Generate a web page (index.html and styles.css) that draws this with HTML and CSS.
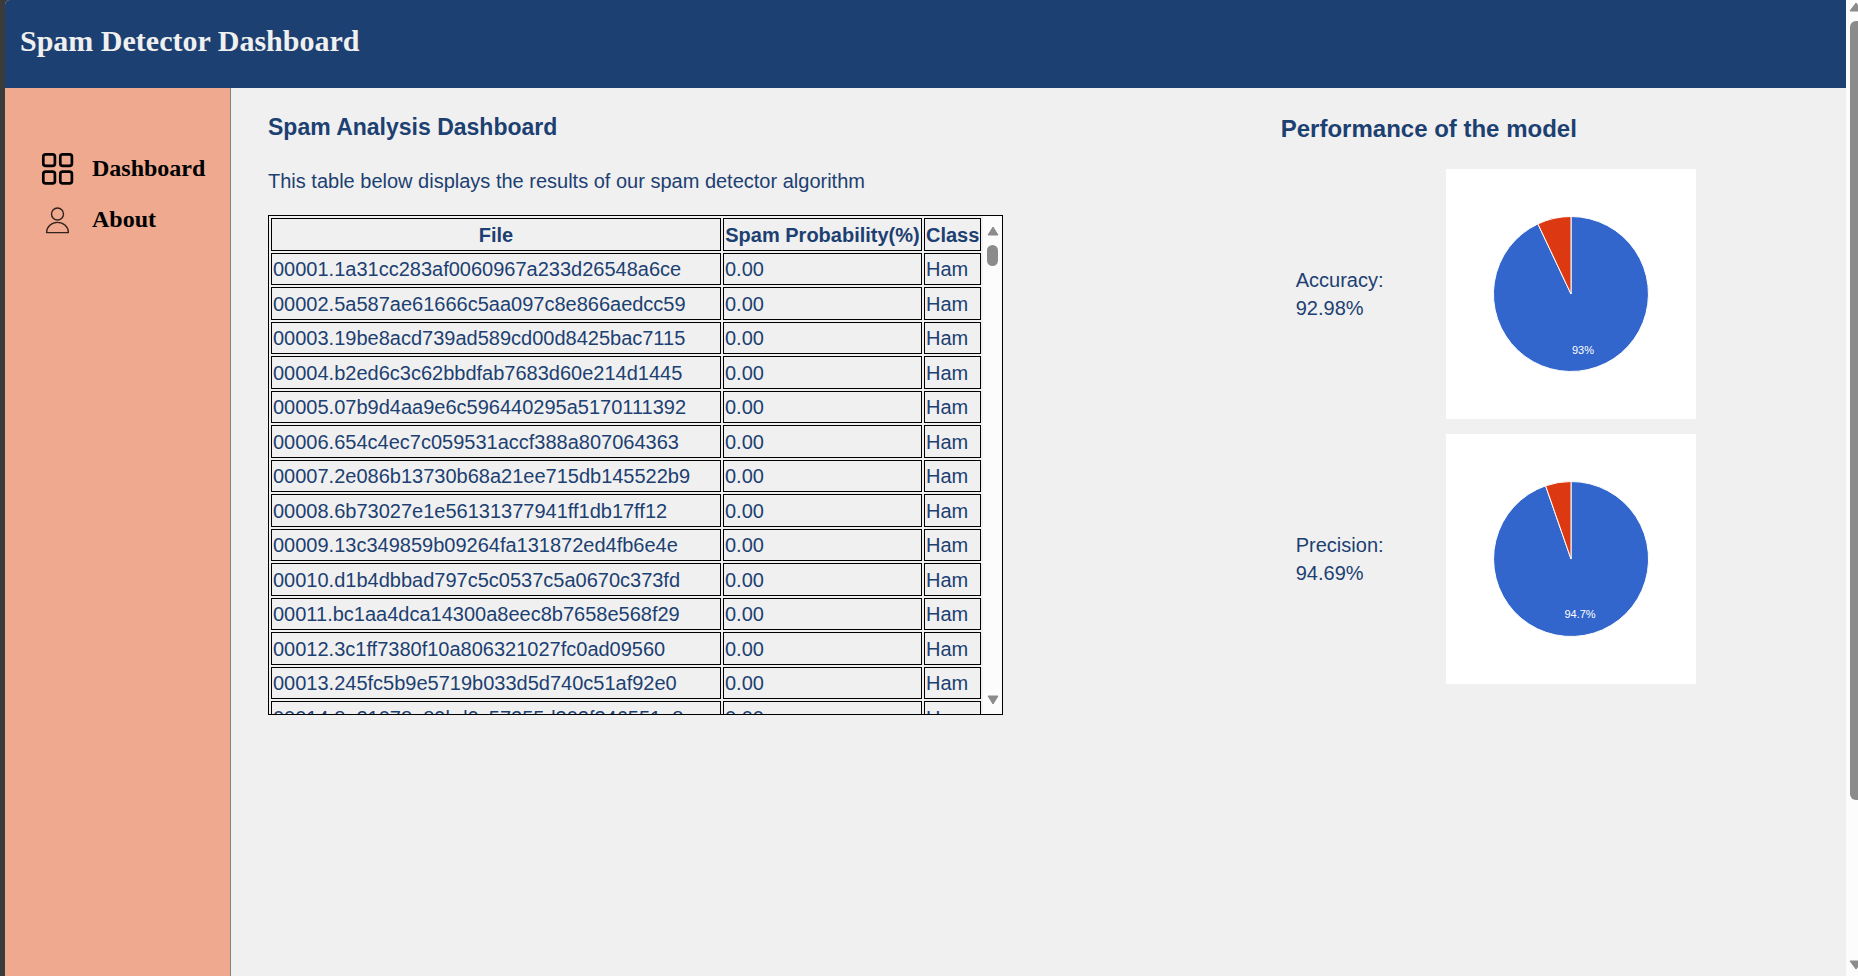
FILE: index.html
```html
<!DOCTYPE html>
<html lang="en">
<head>
<meta charset="utf-8">
<title>Spam Detector Dashboard</title>
<link rel="stylesheet" href="styles.css">
</head>
<body>
<div class="edge"></div>
<div class="app">
  <header class="header"><h1 class="brand">Spam Detector Dashboard</h1></header>
  <div class="body">
    <nav class="sidebar">
      <a class="nav-link" href="#dashboard">
        <svg class="nav-icon" viewBox="0 0 36 36" fill="none" stroke="#000" stroke-width="2.7"><rect x="3.3" y="3.3" width="11.6" height="11.6" rx="2.4"/><rect x="20.3" y="3.3" width="11.6" height="11.6" rx="2.4"/><rect x="3.3" y="20.7" width="11.6" height="11.6" rx="2.4"/><rect x="20.3" y="20.7" width="11.6" height="11.6" rx="2.4"/></svg>
        <span class="nav-text">Dashboard</span>
      </a>
      <a class="nav-link" href="#about">
        <svg class="nav-icon" viewBox="0 0 36 36" fill="none" stroke="#33211d" stroke-width="1.4"><circle cx="17.5" cy="12" r="6"/><path d="M6.6 30.6C6.6 24.6 11.5 20.4 17.5 20.4S28.4 24.6 28.4 30.6Z" stroke-linejoin="round"/></svg>
        <span class="nav-text">About</span>
      </a>
    </nav>
    <main class="main">
      <section class="analysis">
        <h2 class="analysis-title">Spam Analysis Dashboard</h2>
        <p class="intro">This table below displays the results of our spam detector algorithm</p>
        <div class="results">
          <div class="results-view">
            <table class="results-table">
              <thead><tr><th class="col-file">File</th><th class="col-prob">Spam Probability(%)</th><th class="col-class">Class</th></tr></thead>
              <tbody>
                <tr><td>00001.1a31cc283af0060967a233d26548a6ce</td><td>0.00</td><td>Ham</td></tr>
                <tr><td>00002.5a587ae61666c5aa097c8e866aedcc59</td><td>0.00</td><td>Ham</td></tr>
                <tr><td>00003.19be8acd739ad589cd00d8425bac7115</td><td>0.00</td><td>Ham</td></tr>
                <tr><td>00004.b2ed6c3c62bbdfab7683d60e214d1445</td><td>0.00</td><td>Ham</td></tr>
                <tr><td>00005.07b9d4aa9e6c596440295a5170111392</td><td>0.00</td><td>Ham</td></tr>
                <tr><td>00006.654c4ec7c059531accf388a807064363</td><td>0.00</td><td>Ham</td></tr>
                <tr><td>00007.2e086b13730b68a21ee715db145522b9</td><td>0.00</td><td>Ham</td></tr>
                <tr><td>00008.6b73027e1e56131377941ff1db17ff12</td><td>0.00</td><td>Ham</td></tr>
                <tr><td>00009.13c349859b09264fa131872ed4fb6e4e</td><td>0.00</td><td>Ham</td></tr>
                <tr><td>00010.d1b4dbbad797c5c0537c5a0670c373fd</td><td>0.00</td><td>Ham</td></tr>
                <tr><td>00011.bc1aa4dca14300a8eec8b7658e568f29</td><td>0.00</td><td>Ham</td></tr>
                <tr><td>00012.3c1ff7380f10a806321027fc0ad09560</td><td>0.00</td><td>Ham</td></tr>
                <tr><td>00013.245fc5b9e5719b033d5d740c51af92e0</td><td>0.00</td><td>Ham</td></tr>
                <tr><td>00014.8e21078a89bd9c57255d302f346551e8</td><td>0.00</td><td>Ham</td></tr>
              </tbody>
            </table>
          </div>
          <div class="results-scroll">
            <svg class="arrow" viewBox="0 0 12 10"><path d="M6 1L11 9H1Z" fill="#8b8b8b" stroke="#8b8b8b" stroke-linejoin="round"/></svg>
            <div class="results-thumb"></div>
            <svg class="arrow arrow-down" viewBox="0 0 12 10"><path d="M6 9L1 1H11Z" fill="#8b8b8b" stroke="#8b8b8b" stroke-linejoin="round"/></svg>
          </div>
        </div>
      </section>
      <section class="performance">
        <h2 class="performance-title">Performance of the model</h2>
        <div class="metric">
          <p class="metric-text">Accuracy:<br>92.98%</p>
          <svg class="chart" viewBox="0 0 250 250" role="img" aria-label="Accuracy 93%">
            <path d="M125 125V47.5A77.5 77.5 0 1 1 91.9 54.9Z" fill="#3366cc" stroke="#fff"/>
            <path d="M125 125L91.9 54.9A77.5 77.5 0 0 1 125 47.5Z" fill="#dc3912" stroke="#fff"/>
            <text class="chart-label" x="137" y="185">93%</text>
          </svg>
        </div>
        <div class="metric">
          <p class="metric-text">Precision:<br>94.69%</p>
          <svg class="chart" viewBox="0 0 250 250" role="img" aria-label="Precision 94.7%">
            <path d="M125 125V47.5A77.5 77.5 0 1 1 99.6 51.8Z" fill="#3366cc" stroke="#fff"/>
            <path d="M125 125L99.6 51.8A77.5 77.5 0 0 1 125 47.5Z" fill="#dc3912" stroke="#fff"/>
            <text class="chart-label" x="134" y="184">94.7%</text>
          </svg>
        </div>
      </section>
    </main>
  </div>
</div>
<div class="page-scroll">
  <svg class="page-arrow" viewBox="0 0 12 10"><path d="M10 1L16 9H4Z" fill="#8b8b8b" stroke="#8b8b8b" stroke-linejoin="round"/></svg>
  <div class="page-track"><div class="page-thumb"></div></div>
  <svg class="page-arrow" viewBox="0 0 12 10"><path d="M10 9L4 1H16Z" fill="#8b8b8b" stroke="#8b8b8b" stroke-linejoin="round"/></svg>
</div>
</body>
</html>
```
FILE: styles.css
```css
* { box-sizing: border-box; }

body {
  margin: 0;
  min-height: 100vh;
  display: flex;
  background: #3b3b3b;
  color: #1c4071;
  font: 20px/28px "Liberation Sans", Arial, sans-serif;
}

h1, h2, p { margin: 0; }

.edge { width: 5px; }

.app {
  flex: 1;
  display: flex;
  flex-direction: column;
  background: #f0f0f0;
  border-top-left-radius: 5px;
  overflow: hidden;
}

.header {
  height: 88px;
  padding: 24px 15px;
  background: #1c4071;
}

.brand {
  color: #f0f0f0;
  font: bold 30px/34px "Liberation Serif", "Times New Roman", serif;
}

.body { flex: 1; display: flex; }

.sidebar {
  width: 226px;
  padding: 63px 0 0 35px;
  display: flex;
  flex-direction: column;
  gap: 15px;
  background: #efa98f;
  border-right: 1px solid #808080;
}

.nav-link {
  display: flex;
  align-items: center;
  gap: 16px;
  color: #000;
  text-decoration: none;
  font: bold 24px/28px "Liberation Serif", "Times New Roman", serif;
}

.nav-icon { width: 36px; height: 36px; }

.nav-text { padding-bottom: 2px; }

.main {
  flex: 1;
  display: grid;
  grid-template-columns: 13fr 7fr;
  align-items: start;
}

.analysis { padding: 25px 0 0 37px; }

.analysis-title { margin-bottom: 26px; font-size: 23px; }

.intro { margin-bottom: 20px; }

.results {
  width: 735px;
  height: 500px;
  display: flex;
  border: 1px solid #000;
}

.results-view { flex: 1; overflow: hidden; }

.results-table {
  width: 100%;
  table-layout: fixed;
  border-spacing: 2px;
}

.results-table th,
.results-table td {
  padding: 1px;
  border: 1px solid #000;
  white-space: nowrap;
}

.results-table th,
.results-table tr:nth-child(even) td { padding-top: 2px; }

.col-file { width: 450px; }
.col-prob { width: 199px; }

.results-scroll {
  width: 19px;
  padding: 10px 0 9px;
  display: flex;
  flex-direction: column;
  align-items: center;
  background: #fcfcfc;
}

.arrow { width: 12px; height: 10px; }
.arrow-down { margin-top: auto; }

.results-thumb {
  width: 11px;
  height: 21px;
  margin-top: 9px;
  border-radius: 6px;
  background: #8b8b8b;
}

.performance { padding-top: 27px; }

.performance-title { margin-bottom: 26px; font-size: 24px; }

.metric {
  display: flex;
  align-items: center;
  margin-bottom: 15px;
  padding-left: 15px;
}

.metric-text { width: 150px; }

.chart { width: 250px; height: 250px; background: #fff; }

.chart-label {
  fill: #fff;
  font-size: 11px;
  text-anchor: middle;
}

.page-scroll {
  width: 12px;
  padding: 2px 0 6px;
  display: flex;
  flex-direction: column;
  background: #fcfcfc;
}

.page-arrow { width: 12px; height: 10px; }

.page-track { flex: 1; padding: 9px 0 0 4px; }

.page-thumb {
  height: 83%;
  border-radius: 6px 0 0 6px;
  background: #8b8b8b;
}
```
